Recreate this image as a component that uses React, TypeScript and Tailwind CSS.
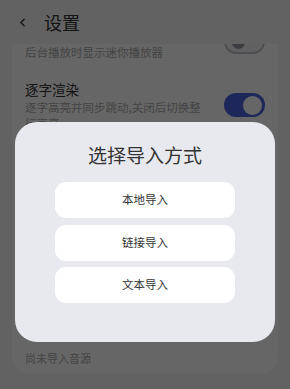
import { ChevronLeft } from 'lucide-react';

const font = "font-['Noto_Sans_CJK_SC','Noto_Sans',sans-serif]";

const Toggle = ({ on }: { on: boolean }) =>
  on ? (
    <div className="w-[41px] h-[24px] rounded-full bg-[#4a62e0] flex items-center justify-end pr-[3px] shrink-0">
      <div className="w-[19px] h-[19px] rounded-full bg-white" />
    </div>
  ) : (
    <div className="w-[41px] h-[24px] rounded-full border-2 border-[#c4c4cc] bg-[#f2f2f5] flex items-center pl-[6px] shrink-0">
      <div className="w-[13px] h-[13px] rounded-full bg-[#9a9aa2]" />
    </div>
  );

const SettingRow = ({
  title,
  desc,
  on,
}: {
  title?: string;
  desc: string;
  on: boolean;
}) => (
  <div className="flex items-center gap-3">
    <div className="flex-1 min-w-0">
      <div className="text-[13.5px] leading-[20px] h-[20px] text-[#333]">{title}</div>
      <div className="text-[11.5px] leading-[16px] text-[#aaa]">{desc}</div>
    </div>
    <Toggle on={on} />
  </div>
);

export default function App() {
  return (
    <div className={`relative w-[290px] h-[389px] overflow-hidden bg-[#f5f6f8] ${font}`}>
      <div className="flex flex-col h-full">
        {/* 顶栏 */}
        <header className="relative z-10 h-[44px] shrink-0 flex items-center bg-[#f5f6f8] pl-[16px]">
          <ChevronLeft className="w-[13px] h-[13px] text-[#333]" strokeWidth={2.5} />
          <span className="ml-[15px] text-[18px] leading-none text-[#333]">设置</span>
        </header>

        {/* 列表（已滚动） */}
        <main className="flex-1 overflow-hidden">
          <div className="mx-3 -mt-[30px] bg-white rounded-2xl px-[13px] pt-[10px] pb-[7px]">
            <div className="flex flex-col gap-[19px]">
              <SettingRow desc="后台播放时显示迷你播放器" on={false} />
              <SettingRow
                title="逐字渲染"
                desc="逐字高亮并同步跳动,关闭后切换整行高亮"
                on={true}
              />
              <SettingRow title="自动播放" desc="打开应用时继续上次播放" on={false} />
              <SettingRow title="音源管理" desc="管理已导入的音源" on={false} />
              <SettingRow title="歌词翻译" desc="显示歌词翻译" on={false} />
            </div>
            <div className="mt-[54px] text-[11px] leading-[16px] text-[#aaa]">尚未导入音源</div>
          </div>
        </main>
      </div>

      {/* 遮罩 + 弹窗 */}
      <div className="absolute inset-0 z-20 bg-black/60">
        <div className="mx-[15px] mt-[122px] h-[220px] rounded-[22px] bg-[#e7e9ee] pt-[19px]">
          <h2 className="text-center text-[19px] leading-[28px] text-[#333]">选择导入方式</h2>
          <div className="mt-[13px] flex flex-col gap-[6.5px] items-center">
            {['本地导入', '链接导入', '文本导入'].map((label) => (
              <button
                key={label}
                className="w-[180px] h-[36px] rounded-[11px] bg-white text-[11.5px] text-[#333]"
              >
                {label}
              </button>
            ))}
          </div>
        </div>
      </div>
    </div>
  );
}
